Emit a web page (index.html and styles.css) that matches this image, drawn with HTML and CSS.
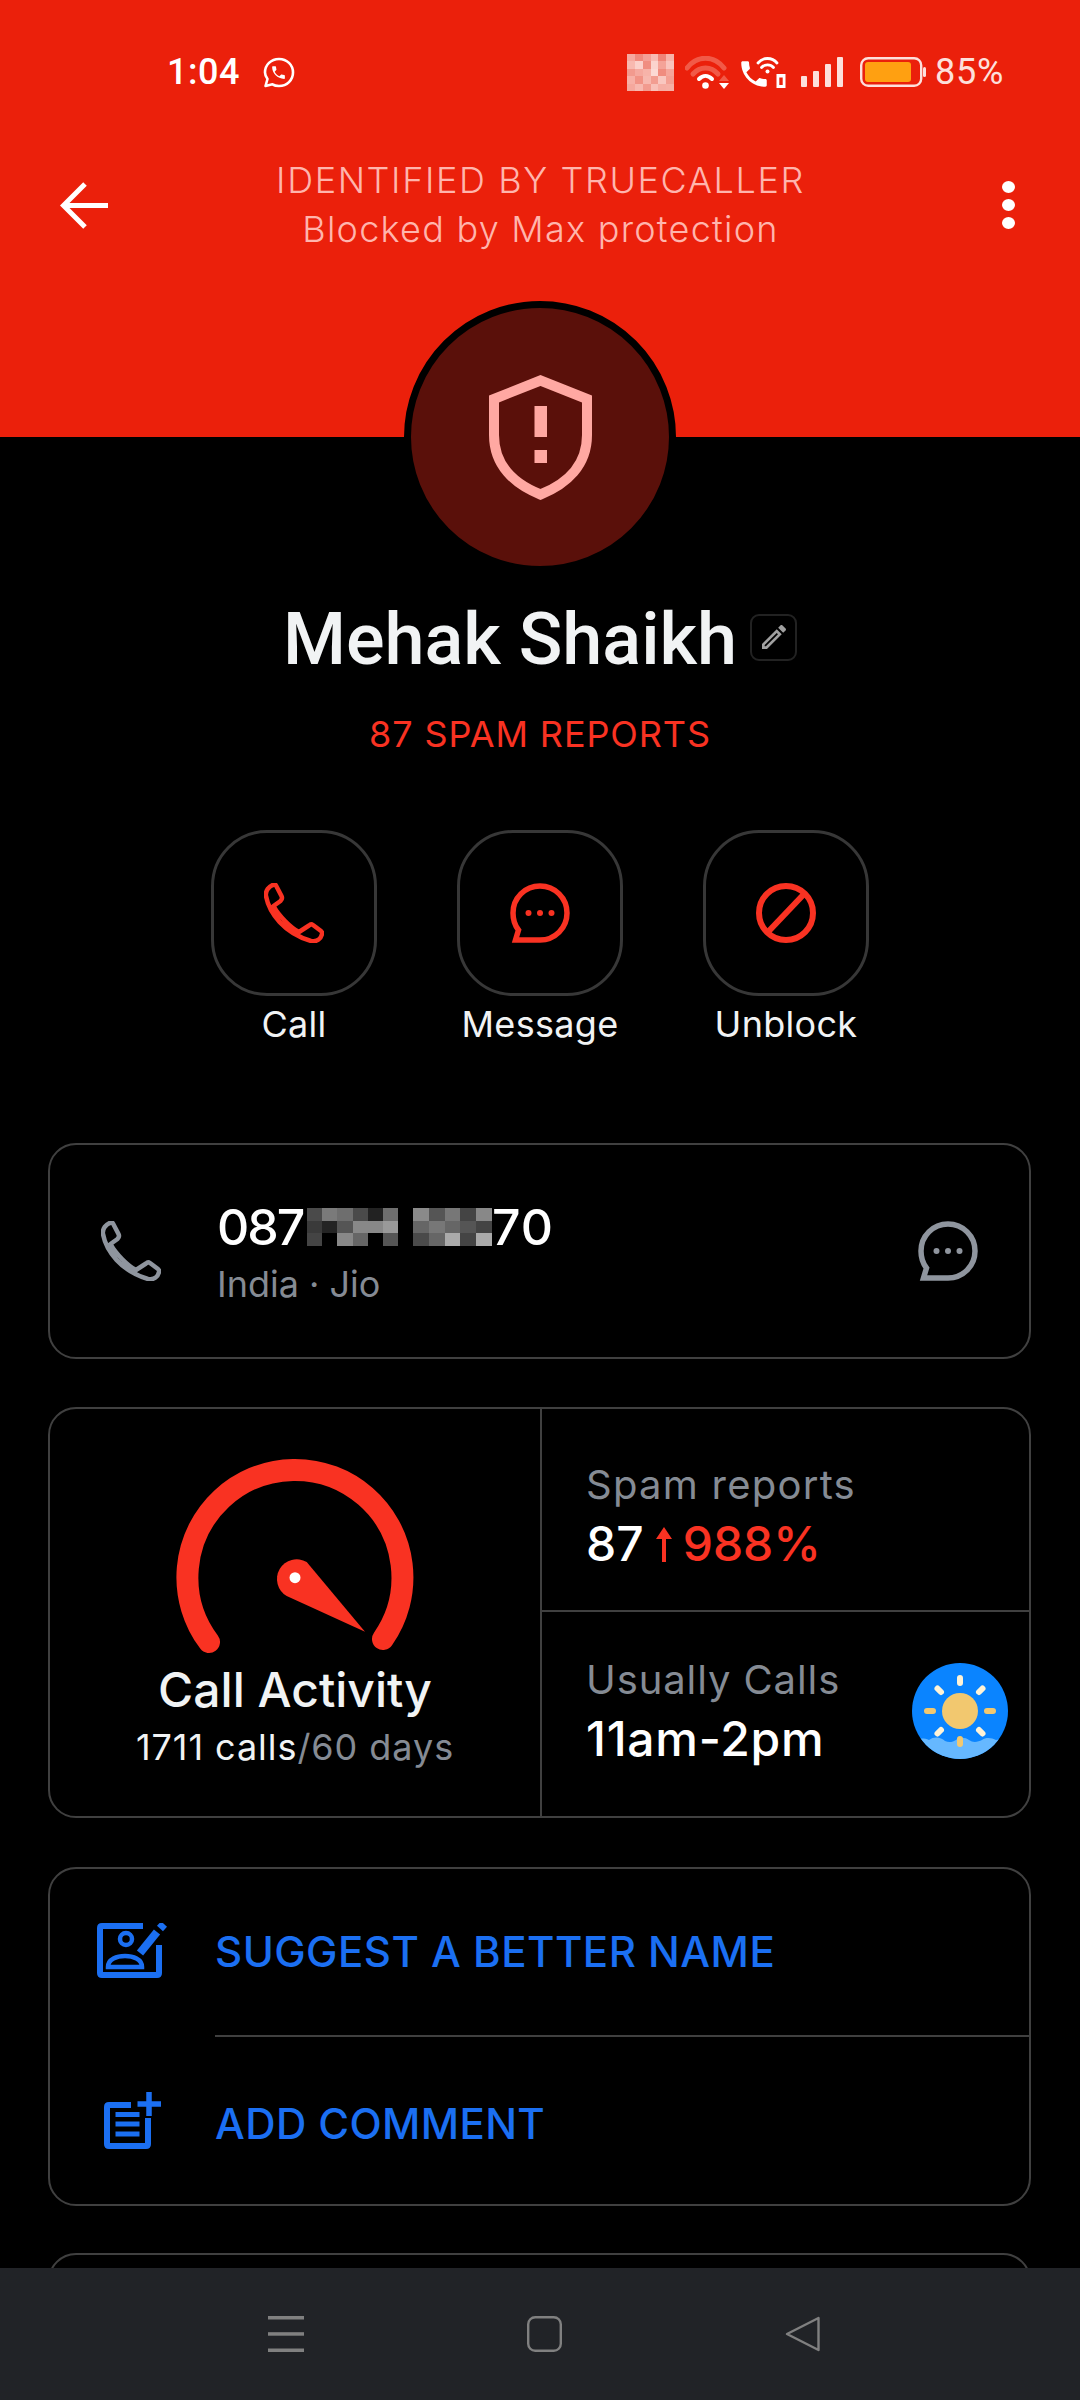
FILE: index.html
```html
<!DOCTYPE html>
<html lang="en">
<head>
<meta charset="utf-8">
<title>Caller profile</title>
<link rel="stylesheet" href="styles.css">
</head>
<body>
<svg class="defs" width="0" height="0" aria-hidden="true">
  <symbol id="i-phone" viewBox="0 0 60 60">
    <path d="M10 1.500C5 3 1 8 2 13C5 30 20 50 47 58C53 59 57 56 58 51C58.500 50 58 49 57 48L49 42C47.500 41 46.500 41 45 42.500L35 49C27 45 15 33 9.500 23L16.500 18C18 16.500 18.500 15 17.500 13L12 2.500C11.500 1.500 11 1.200 10 1.500Z" fill="none" stroke="currentColor" stroke-width="4.500" stroke-linejoin="round"/>
  </symbol>
  <symbol id="i-bubble" viewBox="0 0 60 60">
    <path d="M5.500 57L8.500 47C4.500 42 3 36 3 30C3 15 15 3 30 3C45 3 57 15 57 30C57 45 45 57 30 57Z" fill="none" stroke="currentColor" stroke-width="5.500"/>
    <circle cx="18.500" cy="30" r="3" fill="currentColor"/>
    <circle cx="30" cy="30" r="3" fill="currentColor"/>
    <circle cx="41.500" cy="30" r="3" fill="currentColor"/>
  </symbol>
  <symbol id="i-handset" viewBox="0 0 24 24">
    <path d="M6.620 10.790c1.440 2.830 3.760 5.140 6.590 6.590l2.200-2.200c.27-.27.67-.36 1.020-.24 1.120.37 2.330.57 3.570.57.55 0 1 .45 1 1V20c0 .55-.45 1-1 1-9.390 0-17-7.610-17-17 0-.55.45-1 1-1h3.500c.55 0 1 .45 1 1 0 1.250.2 2.450.57 3.570.11.35.03.74-.25 1.020l-2.200 2.200z" fill="currentColor"/>
  </symbol>
</svg>

<div class="page">
  <main class="scroll">
    <header class="hero">
      <div class="status">
        <div class="status-left">
          <span class="clock">1:04</span>
          <svg class="wa" width="32" height="31" viewBox="0 0 32 31">
            <path d="M2.500 29L4.500 22C3 20 2 18 2 15.500C2 8 8 2 16 2C24 2 30 8 30 15.500C30 23 24 29 16 29C13.500 29 11 28.300 9.500 27.300Z" fill="none" stroke="#fff" stroke-width="2.600" stroke-linejoin="round"/>
            <use href="#i-handset" x="7" y="7" width="17" height="17" color="#fff"/>
          </svg>
        </div>
        <div class="status-right">
          <svg class="s-mosaic" width="47" height="37" viewBox="0 0 6 5" preserveAspectRatio="none" shape-rendering="crispEdges">
            <rect x="0" y="0" width="1" height="1" fill="#f6a99f"/><rect x="1" y="0" width="1" height="1" fill="#f08a7d"/><rect x="2" y="0" width="1" height="1" fill="#f4a096"/><rect x="3" y="0" width="1" height="1" fill="#f8bcb4"/><rect x="4" y="0" width="1" height="1" fill="#ef8578"/><rect x="5" y="0" width="1" height="1" fill="#f7b4aa"/>
            <rect x="0" y="1" width="1" height="1" fill="#f8b9b0"/><rect x="1" y="1" width="1" height="1" fill="#fbd0ca"/><rect x="2" y="1" width="1" height="1" fill="#f08e81"/><rect x="3" y="1" width="1" height="1" fill="#fbd3cd"/><rect x="4" y="1" width="1" height="1" fill="#f4a398"/><rect x="5" y="1" width="1" height="1" fill="#f9c4bd"/>
            <rect x="0" y="2" width="1" height="1" fill="#f29a8e"/><rect x="1" y="2" width="1" height="1" fill="#f5a99f"/><rect x="2" y="2" width="1" height="1" fill="#f7b3a9"/><rect x="3" y="2" width="1" height="1" fill="#fcd9d4"/><rect x="4" y="2" width="1" height="1" fill="#f08c7f"/><rect x="5" y="2" width="1" height="1" fill="#f5a69b"/>
            <rect x="0" y="3" width="1" height="1" fill="#f7b0a6"/><rect x="1" y="3" width="1" height="1" fill="#f19386"/><rect x="2" y="3" width="1" height="1" fill="#f7b8af"/><rect x="3" y="3" width="1" height="1" fill="#f29d91"/><rect x="4" y="3" width="1" height="1" fill="#f9c7c0"/><rect x="5" y="3" width="1" height="1" fill="#f3a094"/>
            <rect x="0" y="4" width="1" height="1" fill="#f5a89d"/><rect x="1" y="4" width="1" height="1" fill="#f7b8af"/><rect x="2" y="4" width="1" height="1" fill="#f29b8f"/><rect x="3" y="4" width="1" height="1" fill="#f8c0b8"/><rect x="4" y="4" width="1" height="1" fill="#f6aea4"/><rect x="5" y="4" width="1" height="1" fill="#f6b0a6"/>
          </svg>
          <svg class="s-wifi" width="45" height="33" viewBox="0 0 45 33">
            <g fill="none" stroke-linecap="round">
              <path d="M2 12C12 -1 29 -1 39 12" stroke="#f15a48" stroke-width="5"/>
              <path d="M8 18C15 10 26 10 33 18" stroke="#f15a48" stroke-width="5"/>
              <path d="M14 23C18 19 23 19 27 23" stroke="#fff" stroke-width="4"/>
            </g>
            <circle cx="20.500" cy="29.500" r="3.300" fill="#fff"/>
            <path d="M39 19L44 25H34Z" fill="#f15a48"/>
            <path d="M34 27H44L39 33Z" fill="#fff"/>
          </svg>
          <svg class="s-call" width="45" height="31" viewBox="0 0 45 31">
            <use href="#i-handset" x="-4" y="-1" width="34" height="36" color="#fff"/>
            <g fill="none" stroke="#fff" stroke-linecap="round" stroke-width="2.800">
              <path d="M17 6C22 0 31 0 36 6"/>
              <path d="M20.500 10.500C23.500 7 29.500 7 32.500 10.500"/>
            </g>
            <circle cx="26.500" cy="14.500" r="2" fill="#fff"/>
            <path d="M35.500 17H44.500V31H35.500ZM38.300 20.500V28H41.700V20.500Z" fill="#fff" fill-rule="evenodd"/>
          </svg>
          <svg class="s-signal" width="42" height="30" viewBox="0 0 42 30" fill="#fde0dc">
            <rect x="0" y="19" width="6" height="11" rx="1"/>
            <rect x="12" y="14" width="6" height="16" rx="1"/>
            <rect x="24" y="7" width="6" height="23" rx="1"/>
            <rect x="36" y="0" width="6" height="30" rx="1"/>
          </svg>
          <svg class="s-batt" width="66" height="30" viewBox="0 0 66 30">
            <rect x="1.200" y="1.200" width="60" height="27.600" rx="7" fill="none" stroke="#fde0dc" stroke-width="2.400"/>
            <rect x="5" y="5" width="46" height="20" rx="3" fill="#ffa011"/>
            <rect x="63" y="10" width="3" height="10" rx="1.500" fill="#fde0dc"/>
          </svg>
          <span class="percent">85%</span>
        </div>
      </div>
      <div class="toolbar">
        <svg class="back" width="48" height="47" viewBox="0 0 48 47">
          <path d="M48 23.500H5M25 2L3.500 23.500L25 45" fill="none" stroke="#fff" stroke-width="5"/>
        </svg>
        <div class="toolbar-title">
          <div class="title-top">IDENTIFIED BY TRUECALLER</div>
          <div class="title-sub">Blocked by Max protection</div>
        </div>
        <div class="kebab"><i></i><i></i><i></i></div>
      </div>
    </header>

    <div class="avatar">
      <svg width="103" height="125" viewBox="0 0 103 125">
        <path d="M51.500 5.500L98 24V60C98 90 78 109 51.500 119.500C25 109 5 90 5 60V24Z" fill="none" stroke="#ffa8a2" stroke-width="10"/>
        <rect x="45.500" y="31" width="12.500" height="31" fill="#ffa8a2"/>
        <rect x="45.500" y="75" width="12.500" height="13" fill="#ffa8a2"/>
      </svg>
    </div>

    <div class="name-row">
      <h1 class="name">Mehak Shaikh</h1>
      <span class="edit">
        <svg width="32" height="32" viewBox="0 0 24 24"><path d="M3 17.250V21h3.750L17.810 9.940l-3.750-3.750L3 17.250zM5.920 19H5v-.92l9.060-9.060.92.92L5.920 19zM20.710 7.040c.39-.39.39-1.020 0-1.410l-2.340-2.340c-.2-.2-.45-.29-.71-.29s-.51.09-.7.28l-1.830 1.830 3.750 3.750 1.830-1.820z" fill="#a0a0a0"/></svg>
      </span>
    </div>
    <p class="reports">87 SPAM REPORTS</p>

    <nav class="actions">
      <div class="action">
        <div class="action-btn"><svg class="red" width="60" height="60"><use href="#i-phone"/></svg></div>
        <span class="action-label">Call</span>
      </div>
      <div class="action">
        <div class="action-btn"><svg class="red" width="60" height="60"><use href="#i-bubble"/></svg></div>
        <span class="action-label">Message</span>
      </div>
      <div class="action">
        <div class="action-btn">
          <svg width="60" height="60" viewBox="0 0 60 60" fill="none" stroke="#f93222" stroke-width="6">
            <circle cx="30" cy="30" r="27"/>
            <path d="M49 10L11 50"/>
          </svg>
        </div>
        <span class="action-label">Unblock</span>
      </div>
    </nav>

    <section class="card number-card">
      <svg class="grey number-icon" width="60" height="60"><use href="#i-phone"/></svg>
      <div class="number-body">
        <div class="number">
          <span class="digits-head">087</span>
          <svg class="mask-a" width="91" height="38" viewBox="0 0 6 3" preserveAspectRatio="none" shape-rendering="crispEdges">
            <rect x="0" y="0" width="1" height="1" fill="#4a4a4a"/><rect x="1" y="0" width="1" height="1" fill="#7a7a7a"/><rect x="2" y="0" width="1" height="1" fill="#6e6e6e"/><rect x="3" y="0" width="1" height="1" fill="#4a4a4a"/><rect x="4" y="0" width="1" height="1" fill="#222"/><rect x="5" y="0" width="1" height="1" fill="#6e6e6e"/>
            <rect x="0" y="1" width="1" height="1" fill="#3a3a3a"/><rect x="1" y="1" width="1" height="1" fill="#242424"/><rect x="2" y="1" width="1" height="1" fill="#555"/><rect x="3" y="1" width="1" height="1" fill="#888"/><rect x="4" y="1" width="1" height="1" fill="#888"/><rect x="5" y="1" width="1" height="1" fill="#999"/>
            <rect x="0" y="2" width="1" height="1" fill="#444"/><rect x="1" y="2" width="1" height="1" fill="#000"/><rect x="2" y="2" width="1" height="1" fill="#888"/><rect x="3" y="2" width="1" height="1" fill="#666"/><rect x="4" y="2" width="1" height="1" fill="#000"/><rect x="5" y="2" width="1" height="1" fill="#555"/>
          </svg>
          <svg class="mask-b" width="79" height="38" viewBox="0 0 5 3" preserveAspectRatio="none" shape-rendering="crispEdges">
            <rect x="0" y="0" width="1" height="1" fill="#8a8a8a"/><rect x="1" y="0" width="1" height="1" fill="#555"/><rect x="2" y="0" width="1" height="1" fill="#777"/><rect x="3" y="0" width="1" height="1" fill="#444"/><rect x="4" y="0" width="1" height="1" fill="#888"/>
            <rect x="0" y="1" width="1" height="1" fill="#666"/><rect x="1" y="1" width="1" height="1" fill="#777"/><rect x="2" y="1" width="1" height="1" fill="#666"/><rect x="3" y="1" width="1" height="1" fill="#555"/><rect x="4" y="1" width="1" height="1" fill="#444"/>
            <rect x="0" y="2" width="1" height="1" fill="#4a4a4a"/><rect x="1" y="2" width="1" height="1" fill="#666"/><rect x="2" y="2" width="1" height="1" fill="#aaa"/><rect x="3" y="2" width="1" height="1" fill="#444"/><rect x="4" y="2" width="1" height="1" fill="#aaa"/>
          </svg>
          <span class="digits-tail">70</span>
        </div>
        <div class="carrier">India · Jio</div>
      </div>
      <svg class="grey" width="60" height="60"><use href="#i-bubble"/></svg>
    </section>

    <section class="card stats-card">
      <div class="activity">
        <svg class="gauge" width="240" height="196" viewBox="0 0 240 196">
          <path d="M34 184A107.500 107.500 0 1 1 208 181" fill="none" stroke="#f93222" stroke-width="22" stroke-linecap="round"/>
          <path d="M131.700 104L190 173.700L111.700 138A19.500 19.500 0 1 1 131.700 104Z" fill="#f93222"/>
          <circle cx="120" cy="119.700" r="5.500" fill="#fff"/>
        </svg>
        <div class="activity-title">Call Activity</div>
        <div class="activity-sub">1711 calls<span class="muted">/60 days</span></div>
      </div>
      <div class="stat stat-spam">
        <div class="stat-label">Spam reports</div>
        <div class="stat-value">87<svg class="trend" width="16" height="35" viewBox="0 0 16 35"><path d="M8 0L16 12H10V35H6V12H0Z" fill="#f93222"/></svg><span class="up">988%</span></div>
      </div>
      <div class="stat stat-hours">
        <div>
          <div class="stat-label">Usually Calls</div>
          <div class="stat-value strong">11am-2pm</div>
        </div>
        <svg class="sun" width="96" height="96" viewBox="0 0 96 96">
          <defs><clipPath id="sun-disc"><circle cx="48" cy="48" r="48"/></clipPath></defs>
          <circle cx="48" cy="48" r="48" fill="#0a84ff"/>
          <path clip-path="url(#sun-disc)" d="M0 78C6 75 12 75 17 77C22 73 29 74 33 78C37 80 41 79 44 77C47 74 53 74 57 77C61 80 66 79 70 77C74 74 80 75 84 77C88 76 92 76 96 78V96H0Z" fill="#66b8ff"/>
          <g stroke-width="6" stroke-linecap="round">
            <path d="M15 48H21M75 48H81M48 76V81" stroke="#f2c86f"/>
            <path d="M48 15V20M25.500 25.500L29 29M70.500 25.500L67 29M25.500 70.500L29 67M70.500 70.500L67 67" stroke="#fff3d6"/>
          </g>
          <circle cx="48" cy="48" r="18" fill="#f2c86f"/>
        </svg>
      </div>
    </section>

    <section class="card links-card">
      <div class="link">
        <span class="link-icon">
          <svg class="suggest" width="71" height="55" viewBox="0 0 71 55" fill="none" stroke="#1b6ff2">
            <path d="M46 3H5Q3 3 3 5V50Q3 52 5 52H60Q62 52 62 50V22" stroke-width="6"/>
            <circle cx="29" cy="16" r="6" stroke-width="4.500"/>
            <path d="M11 44C11 36 20 33 28 33C36 33 45 36 45 44Z" stroke-width="4.500"/>
            <path d="M43 30L60 9" stroke-width="8"/>
            <path d="M63 5.500L67 1" stroke-width="8"/>
          </svg>
        </span>
        <span class="link-text">SUGGEST A BETTER NAME</span>
      </div>
      <div class="link">
        <span class="link-icon">
          <svg class="comment" width="57" height="57" viewBox="0 0 57 57" fill="none" stroke="#1b6ff2" stroke-width="6">
            <path d="M27 13H5Q3 13 3 15V52Q3 54 5 54H42Q44 54 44 52V26"/>
            <path d="M45 0V24M33.500 12H57" stroke-width="5.500"/>
            <path d="M11.500 22.500H35.500M11.500 32H35.500M11.500 42H35.500" stroke-width="5"/>
          </svg>
        </span>
        <span class="link-text lower">ADD COMMENT</span>
      </div>
    </section>

    <section class="card next-card"></section>
  </main>

  <footer class="navbar">
    <svg width="36" height="36" viewBox="0 0 36 36" fill="#808080">
      <rect y="0" width="36" height="3.500"/><rect y="16.200" width="36" height="3.500"/><rect y="32.500" width="36" height="3.500"/>
    </svg>
    <svg width="35" height="36" viewBox="0 0 35 36"><rect x="1.200" y="1.200" width="32.600" height="33.600" rx="7" fill="none" stroke="#808080" stroke-width="2.400"/></svg>
    <svg width="35" height="36" viewBox="0 0 35 36"><path d="M33.500 2V34L2 18Z" fill="none" stroke="#808080" stroke-width="2.400" stroke-linejoin="round"/></svg>
  </footer>
</div>
</body>
</html>
```

FILE: styles.css
```css
* { box-sizing: border-box; margin: 0; padding: 0; }

html, body { width: 1080px; height: 2400px; background: #000; }

body {
  font-family: "Inter", "Liberation Sans", sans-serif;
  color: #f1f3f4;
  overflow: hidden;
}

.defs { position: absolute; }

svg { display: block; flex: none; }

.page { display: flex; flex-direction: column; height: 2400px; }

.scroll { flex: 1; min-height: 0; overflow: hidden; }

/* red header */
.hero { height: 437px; background: #eb200b; padding-top: 32px; }

.status {
  height: 80px;
  display: flex;
  justify-content: space-between;
  align-items: center;
  padding: 0 76px 0 167px;
}

.status-left, .status-right { display: flex; align-items: center; }
.status-left { gap: 23px; }

.clock {
  font-family: "Roboto", sans-serif;
  font-size: 36px;
  font-weight: 500;
  line-height: 44px;
  letter-spacing: 0.5px;
  color: #fff;
}

.s-wifi { margin-left: 11px; }
.s-call { margin-left: 11px; }
.s-signal { margin-left: 15px; }
.s-batt { margin-left: 17px; }

.percent {
  margin-left: 9px;
  font-family: "Roboto", sans-serif;
  font-size: 36px;
  line-height: 44px;
  letter-spacing: 0.7px;
  color: #fde0dc;
}

.toolbar {
  margin-top: 44px;
  display: grid;
  grid-template-columns: 1fr auto 1fr;
  align-items: center;
  padding: 0 65px 0 60px;
}

.toolbar-title {
  margin-left: 6px;
  text-align: center;
  font-size: 36px;
  line-height: 49px;
  font-weight: 300;
  color: #ffb5ad;
}
.title-top { letter-spacing: 1.6px; }
.title-sub { letter-spacing: 1.25px; }

.kebab {
  justify-self: end;
  display: flex;
  flex-direction: column;
  gap: 6px;
}
.kebab i { width: 13px; height: 12px; border-radius: 50%; background: #fff; }

/* avatar straddling the header edge */
.avatar {
  width: 272px;
  height: 272px;
  margin: -136px auto 0;
  border: 7px solid #000;
  border-radius: 50%;
  background: #5a100a;
  display: flex;
  align-items: center;
  justify-content: center;
}

.name-row {
  margin-top: 25px;
  display: flex;
  justify-content: center;
  align-items: center;
  gap: 13px;
}

.name { font-size: 72px; line-height: 84px; font-weight: 500; font-family: "Roboto", sans-serif; }

.edit {
  width: 47px;
  height: 47px;
  margin-top: -6px;
  border: 2px solid #222;
  border-radius: 9px;
  display: flex;
  align-items: center;
  justify-content: center;
}

.reports {
  margin-top: 30px;
  text-align: center;
  font-size: 36px;
  line-height: 44px;
  letter-spacing: 0.9px;
  color: #f93222;
}

/* quick actions */
.actions { margin-top: 74px; display: flex; justify-content: center; gap: 80px; }
.action { width: 166px; display: flex; flex-direction: column; align-items: center; gap: 6px; }
.action-btn {
  width: 166px;
  height: 166px;
  border: 3px solid #373737;
  border-radius: 56px;
  display: flex;
  align-items: center;
  justify-content: center;
}
.action-label { font-size: 36px; line-height: 44px; letter-spacing: 0.3px; white-space: nowrap; }

.red { color: #f93222; }
.grey { color: #8f959e; }

/* cards */
.card {
  margin: 0 49px 0 48px;
  border: 2px solid #404040;
  border-radius: 28px;
}

.number-card {
  margin-top: 97px;
  height: 216px;
  display: flex;
  align-items: center;
  padding: 0 51px;
}

.number-icon { margin-right: 56px; }
.number-body { flex: 1; }

.number {
  display: flex;
  align-items: center;
  font-size: 50px;
  line-height: 60px;
  font-weight: 500;
  color: #fff;
}

.digits-head { width: 90px; letter-spacing: -2px; }
.digits-tail { letter-spacing: 1px; }
.mask-b { margin-left: 15px; }

.carrier { margin-top: 5px; font-size: 36px; line-height: 44px; color: #858b94; }

.stats-card {
  margin-top: 48px;
  height: 411px;
  display: grid;
  grid-template-columns: 492px 1fr;
  grid-template-rows: 203px 1fr;
}

.activity {
  grid-row: 1 / 3;
  border-right: 2px solid #404040;
  display: flex;
  flex-direction: column;
  align-items: center;
  padding-top: 49px;
}

.activity-title { margin-top: 8px; font-size: 48px; line-height: 56px; font-weight: 500; }
.activity-sub { margin-top: 7px; font-size: 36px; line-height: 44px; letter-spacing: 0.95px; }
.muted { color: #858b94; }

.stat { padding-left: 44px; }
.stat-spam { border-bottom: 2px solid #404040; padding-top: 52px; }
.stat-hours {
  display: flex;
  align-items: center;
  justify-content: space-between;
  padding-right: 21px;
  padding-bottom: 6px;
}

.stat-label { font-size: 40px; line-height: 48px; letter-spacing: 1.25px; color: #858b94; }
.stat-hours .stat-label { letter-spacing: 0.9px; }
.stat-value {
  margin-top: 7px;
  display: flex;
  align-items: center;
  font-size: 48px;
  line-height: 56px;
  font-weight: 500;
  color: #fff;
}
.stat-value.strong { letter-spacing: 0.75px; }
.trend { margin: 0 11px 0 12px; }
.up { color: #f93222; }

.links-card { margin-top: 49px; height: 339px; display: flex; flex-direction: column; }
.link { flex: 1; display: flex; align-items: center; }
.link-icon { width: 165px; display: flex; justify-content: center; }
.suggest { margin: -4px 0 0 -1px; }
.comment { margin-left: 0; }

.link-text {
  flex: 1;
  align-self: stretch;
  display: flex;
  align-items: center;
  font-size: 42px;
  font-weight: 500;
  line-height: 52px;
  letter-spacing: 0.5px;
  color: #1b6ff2;
}
.link:first-child .link-text { border-bottom: 2px solid #404040; }
.link-text.lower { padding-top: 7px; letter-spacing: 0.4px; }

.next-card { margin-top: 47px; height: 120px; }

/* system navigation */
.navbar {
  height: 132px;
  background: #212327;
  display: flex;
  align-items: center;
  justify-content: space-between;
  padding: 0 260px 0 268px;
}
```
